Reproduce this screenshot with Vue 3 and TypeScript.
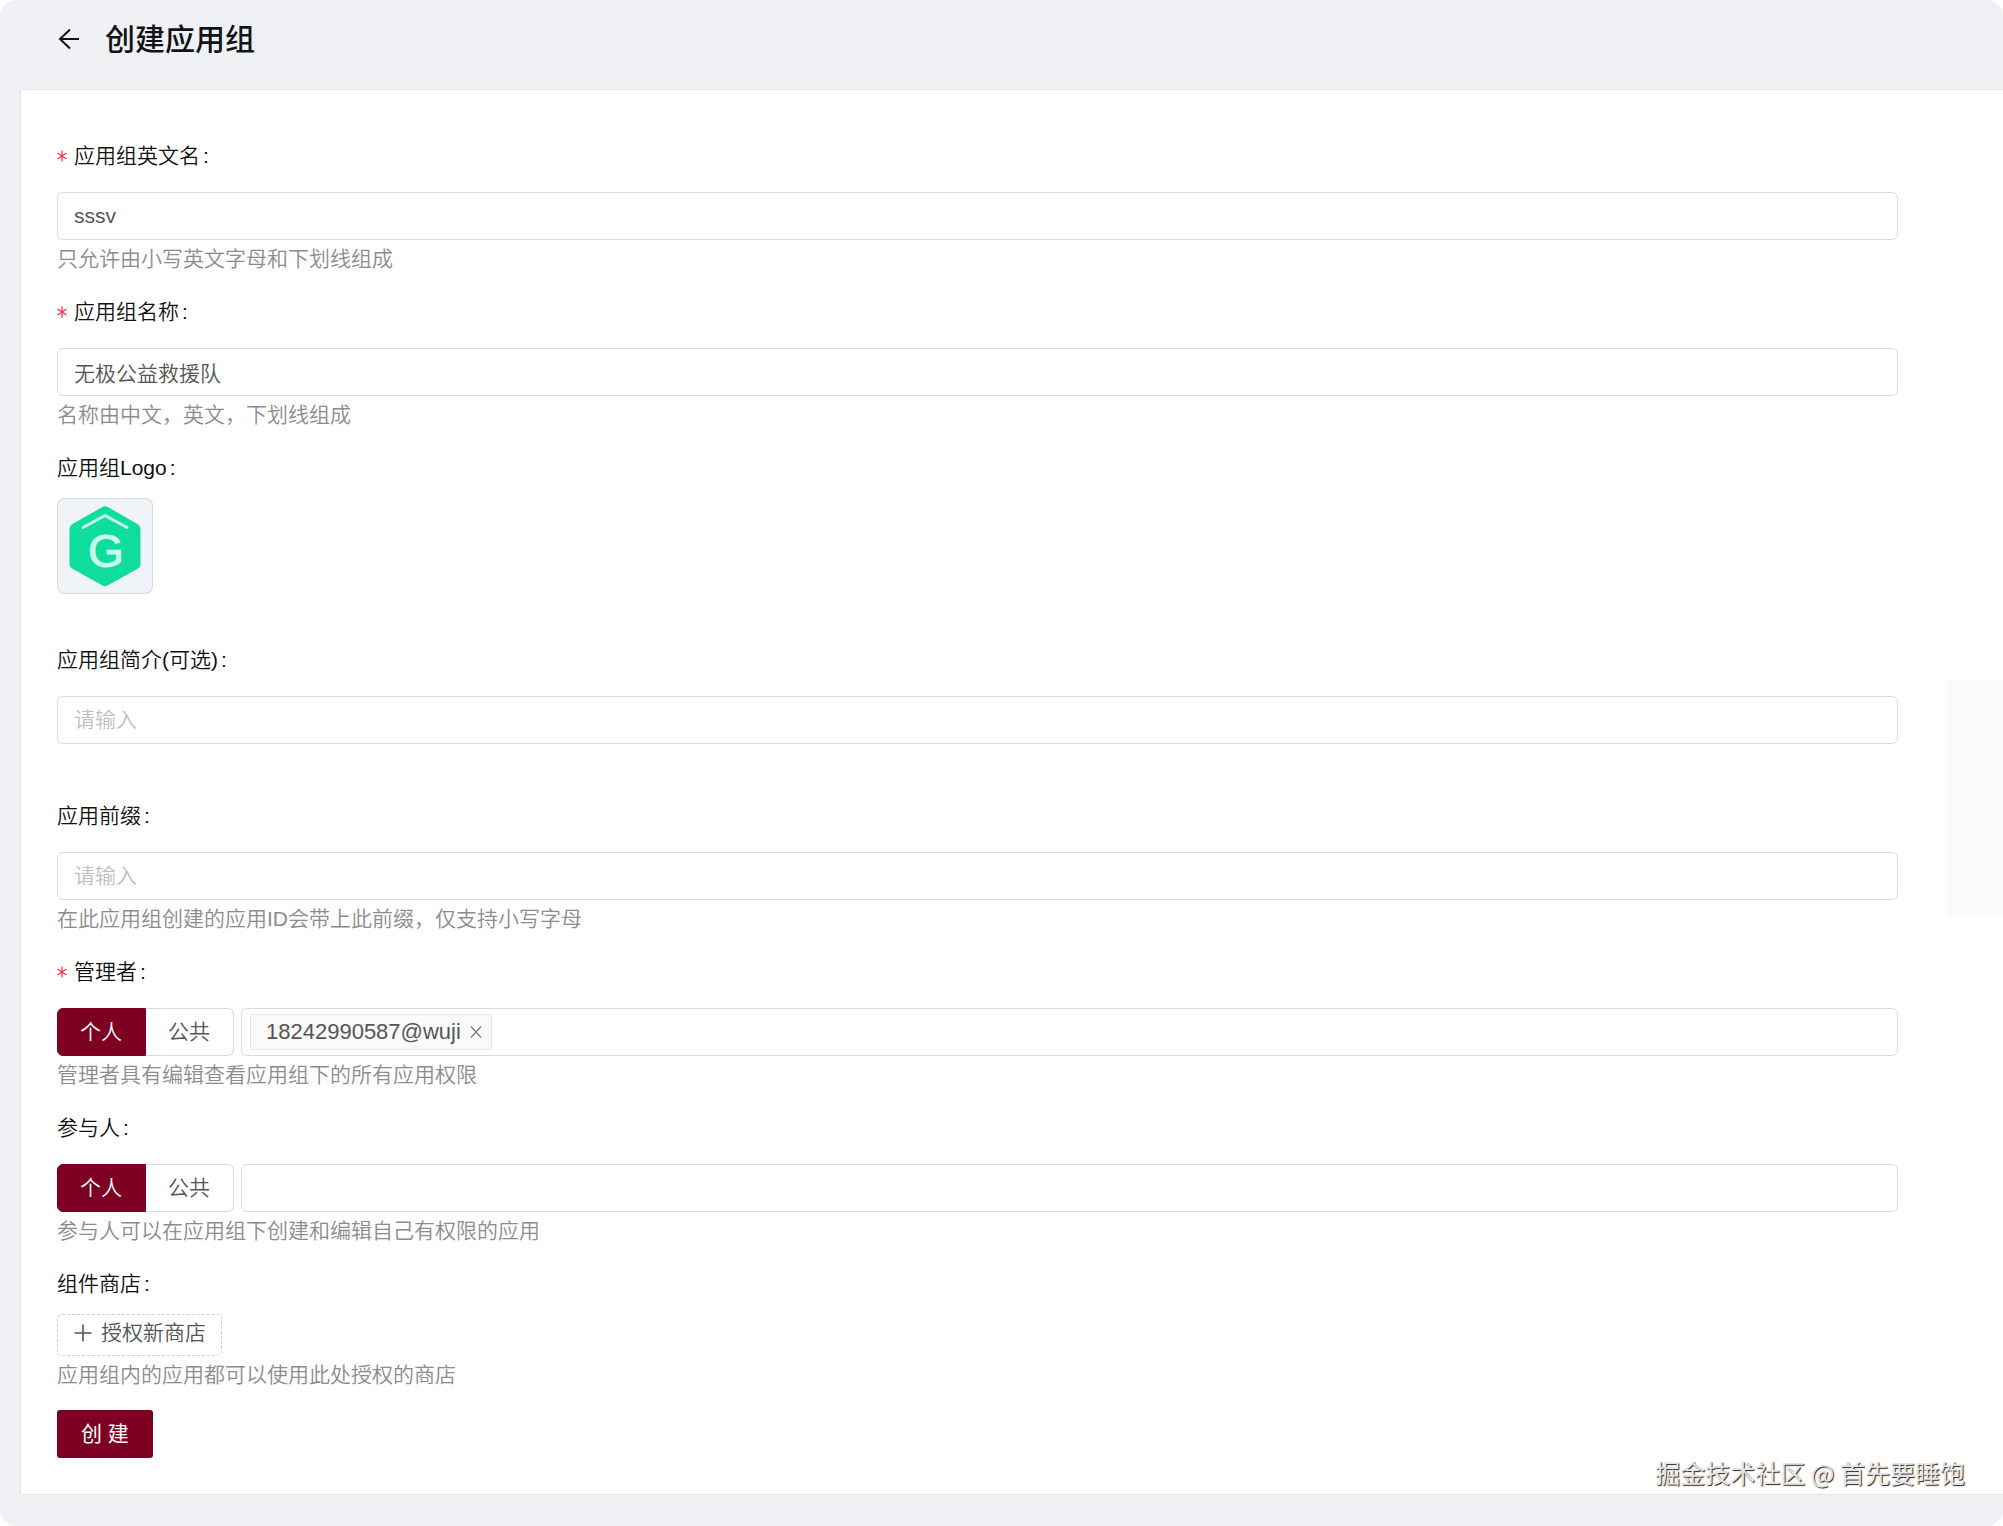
<script setup lang="ts">
import { reactive } from 'vue'

type FieldKind = 'text' | 'logo' | 'members' | 'store'

interface Field {
  id: string
  kind: FieldKind
  label: string
  required?: boolean
  hint?: string
}

interface MemberState {
  scope: string
  tags: string[]
  draft: string
}

const fields: Field[] = [
  { id: 'key', kind: 'text', label: '应用组英文名', required: true, hint: '只允许由小写英文字母和下划线组成' },
  { id: 'name', kind: 'text', label: '应用组名称', required: true, hint: '名称由中文，英文，下划线组成' },
  { id: 'logo', kind: 'logo', label: '应用组Logo' },
  { id: 'intro', kind: 'text', label: '应用组简介(可选)' },
  { id: 'prefix', kind: 'text', label: '应用前缀', hint: '在此应用组创建的应用ID会带上此前缀，仅支持小写字母' },
  { id: 'managers', kind: 'members', label: '管理者', required: true, hint: '管理者具有编辑查看应用组下的所有应用权限' },
  { id: 'participants', kind: 'members', label: '参与人', hint: '参与人可以在应用组下创建和编辑自己有权限的应用' },
  { id: 'store', kind: 'store', label: '组件商店', hint: '应用组内的应用都可以使用此处授权的商店' },
]

const values = reactive<Record<string, string>>({ key: 'sssv', name: '无极公益救援队', intro: '', prefix: '' })

const members = reactive<Record<string, MemberState>>({
  managers: { scope: '个人', tags: ['18242990587@wuji'], draft: '' },
  participants: { scope: '个人', tags: [], draft: '' },
})

const scopes = ['个人', '公共']

function removeTag(id: string, index: number) {
  members[id].tags.splice(index, 1)
}
</script>

<template>
  <div class="page">
    <header class="header">
      <button class="back" type="button" aria-label="返回">
        <svg viewBox="0 0 22 22" width="22" height="22" fill="none" stroke="currentColor" stroke-width="2">
          <path d="M21 11H2M12 1.5L2 11l10 9.500" />
        </svg>
      </button>
      <h1 class="title">创建应用组</h1>
    </header>

    <main class="card">
      <form class="form" @submit.prevent>
        <div v-for="field in fields" :key="field.id" class="field" :class="field.kind">
          <label class="label" :for="field.id">
            <svg v-if="field.required" class="star" viewBox="0 0 10 12" width="10" height="12" stroke="currentColor" fill="none" stroke-width="1.300">
              <path d="M5 0.500v11M0.500 3l9 6M9.500 3l-9 6" />
            </svg>
            <span>{{ field.label }}</span><span class="colon">:</span>
          </label>

          <input
            v-if="field.kind === 'text'"
            :id="field.id"
            v-model="values[field.id]"
            class="input"
            type="text"
            placeholder="请输入"
          />

          <button v-else-if="field.kind === 'logo'" :id="field.id" class="logo-box" type="button">
            <svg viewBox="0 0 96 96" width="96" height="96">
              <path
                d="M45 9.200Q48 7.500 51 9.200L80.500 26Q83.500 27.800 83.500 31V66Q83.500 69 80.500 70.800L51 87.300Q48 89 45 87.300L15.500 70.800Q12.500 69 12.500 66V31Q12.500 27.800 15.500 26Z"
                fill="#0fdd9c"
              />
              <path d="M26 29.500L48 17.500L70 29.500" fill="none" stroke="#c9fbf0" stroke-width="3" stroke-linecap="round" stroke-linejoin="round" />
              <text x="49" y="69" class="logo-letter" text-anchor="middle">G</text>
            </svg>
          </button>

          <div v-else-if="field.kind === 'members'" class="member-row">
            <div class="segment" role="radiogroup" :aria-label="field.label">
              <label v-for="scope in scopes" :key="scope" class="option" :class="{ active: members[field.id].scope === scope }">
                <input v-model="members[field.id].scope" class="radio" type="radio" :name="field.id + '-scope'" :value="scope" />
                {{ scope }}
              </label>
            </div>
            <div class="tag-box">
              <span v-for="(tag, i) in members[field.id].tags" :key="tag" class="tag">
                {{ tag }}
                <button class="remove" type="button" aria-label="移除" @click="removeTag(field.id, i)">
                  <svg viewBox="0 0 12 12" width="12" height="12" stroke="currentColor" stroke-width="1.200">
                    <path d="M1 0.500l10 11M11 0.500l-10 11" />
                  </svg>
                </button>
              </span>
              <input :id="field.id" v-model="members[field.id].draft" class="tag-input" type="text" />
            </div>
          </div>

          <button v-else :id="field.id" class="dashed" type="button">
            <svg viewBox="0 0 18 18" width="18" height="18" stroke="currentColor" stroke-width="1.600">
              <path d="M9 0.500v17M0.500 9h17" />
            </svg>
            授权新商店
          </button>

          <p v-if="field.hint" class="hint">{{ field.hint }}</p>
        </div>

        <button class="submit" type="submit">创 建</button>
      </form>
    </main>

    <aside class="side-panel"></aside>
    <div class="watermark">掘金技术社区 @ 首先要睡饱</div>
  </div>
</template>

<style>
body {
  background: #fff;
}
</style>

<style scoped>
.page {
  position: relative;
  box-sizing: border-box;
  min-height: 100vh;
  padding: 0 0 31px 20px;
  border-radius: 16px;
  overflow: hidden;
  background: #eff1f5;
  color: #111;
  font-family: "Liberation Sans", "Noto Sans CJK SC", sans-serif;
  font-size: 21px;
  font-weight: 350;
  line-height: 38px;
}

button,
input {
  box-sizing: border-box;
  font: inherit;
  color: inherit;
}

button {
  cursor: pointer;
}

.header {
  display: flex;
  align-items: center;
  gap: 25px;
  height: 78px;
  padding: 0 38px 11px;
}

.back {
  display: flex;
  padding: 0;
  border: 0;
  background: none;
  color: #111;
}

.title {
  margin: 0;
  padding-bottom: 4px;
  font-family: "Noto Sans CJK SC", sans-serif;
  font-size: 30px;
  font-weight: 500;
  line-height: 40px;
  color: #111316;
}

.card {
  padding: 39px 105px 36px 36px;
  border: 1px solid #e2e4e7;
  border-right: 0;
  border-radius: 3px 0 0 3px;
  background: #fff;
}

.field {
  display: flex;
  flex-direction: column;
  align-items: flex-start;
  min-height: 156px;
}

.field.logo {
  min-height: 192px;
}

.field.store {
  min-height: 153px;
}

.label {
  box-sizing: border-box;
  display: flex;
  align-items: center;
  height: 52px;
  margin-bottom: 11px;
  padding-top: 2px;
}

.logo .label,
.store .label {
  margin-bottom: 5px;
}

.star {
  margin-right: 7px;
  color: #f5334d;
}

.colon {
  margin-left: 3px;
}

.input,
.tag-box {
  width: 100%;
  height: 48px;
  border: 1px solid #d9d9d9;
  border-radius: 6px;
  background: #fff;
  color: #555;
}

.input {
  padding: 0 16px 1px;
}

.input::placeholder {
  color: #bfbfbf;
  opacity: 1;
}

.hint {
  margin: 0;
  color: #8c8c8c;
}

.logo-box {
  width: 96px;
  height: 96px;
  padding: 0;
  border: 0;
  border-radius: 8px;
  background: #f0f3f7;
  box-shadow: inset 0 0 0 1px #d6d9dd;
}

.logo-box svg {
  display: block;
}

.logo-letter {
  font-family: "Liberation Sans", sans-serif;
  font-size: 46px;
  font-weight: 400;
  fill: #c9fbf0;
  stroke: #c9fbf0;
  stroke-width: 1px;
}

.member-row {
  display: flex;
  gap: 7px;
  width: 100%;
}

.segment {
  display: flex;
  flex: none;
}

.option {
  position: relative;
  box-sizing: border-box;
  height: 48px;
  padding: 0 23px 0 22px;
  border: 1px solid #d9d9d9;
  border-left: 0;
  border-radius: 0 6px 6px 0;
  color: #555;
  line-height: 46px;
  cursor: pointer;
}

.option:first-child {
  border-left: 1px solid #d9d9d9;
  border-radius: 6px 0 0 6px;
}

.option.active {
  border-color: #7d0022;
  background: #7d0022;
  color: #fff;
}

.radio {
  position: absolute;
  inset: 0;
  margin: 0;
  opacity: 0;
}

.tag-box {
  box-sizing: border-box;
  display: flex;
  align-items: center;
  gap: 6px;
  min-width: 0;
  padding: 0 8px;
}

.tag {
  display: flex;
  align-items: center;
  gap: 9px;
  box-sizing: border-box;
  height: 36px;
  padding: 0 9px 0 15px;
  border: 1px solid #e4e4e4;
  border-radius: 3px;
  background: #fafafa;
  font-size: 22px;
  line-height: 34px;
}

.remove {
  display: flex;
  padding: 0;
  border: 0;
  background: none;
  color: #777;
}

.tag-input {
  flex: 1;
  min-width: 0;
  height: 36px;
  padding: 0;
  border: 0;
  outline: 0;
  background: none;
}

.dashed {
  display: flex;
  align-items: center;
  gap: 9px;
  height: 42px;
  padding: 0 15px 4px 16px;
  border: 1px dashed #d0d0d0;
  border-radius: 5px;
  background: #fff;
  color: #555;
}

.submit {
  height: 48px;
  padding: 0 24px;
  border: 0;
  border-radius: 3px;
  background: #7d0022;
  color: #fff;
  font-weight: 400;
}

.side-panel {
  position: absolute;
  top: 681px;
  right: 0;
  width: 57px;
  height: 235px;
  background: #fafafa;
}

.watermark {
  position: absolute;
  right: 38px;
  bottom: 35px;
  color: #e6e6e6;
  font-family: "Noto Sans CJK SC", sans-serif;
  font-size: 25px;
  font-weight: 400;
  text-shadow: 1px 1px 1px #222;
}
</style>
